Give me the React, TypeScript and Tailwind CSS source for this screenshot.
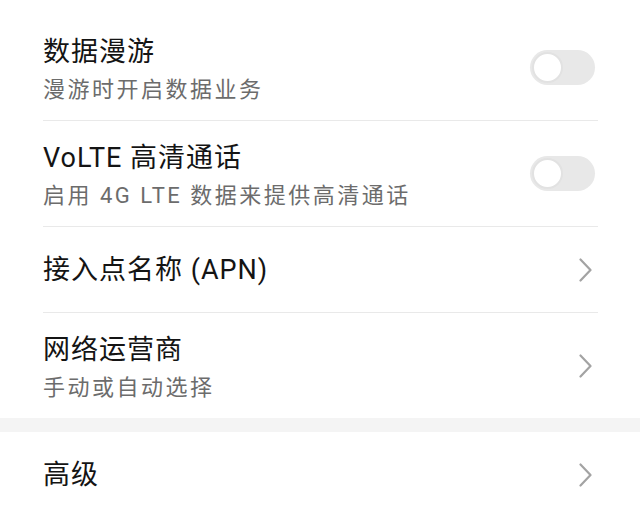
import React from 'react';

const font = { fontFamily: 'Roboto, "Noto Sans CJK SC", sans-serif' };

const Toggle: React.FC = () => (
  <div className="w-[65px] h-[35px] rounded-full bg-[#e8e8e8] flex items-center px-[2px] shrink-0">
    <div className="w-[31px] h-[31px] rounded-full bg-white border-2 border-[#e2e2e2]" />
  </div>
);

const Chevron: React.FC = () => (
  <svg width="13" height="24" viewBox="0 0 13 24" fill="none" className="mr-[3px] shrink-0">
    <polyline points="1.5,1.5 11.5,12 1.5,22.5" stroke="#a3a3a3" strokeWidth="2.2" strokeLinecap="round" strokeLinejoin="round" />
  </svg>
);

const Divider: React.FC = () => <div className="h-px bg-[#e9e9e9] ml-[43px] mr-[42px]" />;

const TwoLineRow: React.FC<{ title: string; sub: string; right: React.ReactNode }> = ({ title, sub, right }) => (
  <div className="h-[105px] flex items-center pl-[43px] pr-[45px]">
    <div className="flex-1 pt-[4px]">
      <div className="text-[27px] leading-[30px] tracking-[1px] text-[#141414]">{title}</div>
      <div className="mt-[9px] text-[22px] leading-[27px] tracking-[2.5px] text-[#6c6c6c]">{sub}</div>
    </div>
    {right}
  </div>
);

const OneLineRow: React.FC<{ title: string }> = ({ title }) => (
  <div className="h-[85px] flex items-center pl-[43px] pr-[45px]">
    <div className="flex-1 text-[27px] leading-[30px] tracking-[1px] text-[#141414]">{title}</div>
    <Chevron />
  </div>
);

const App: React.FC = () => {
  return (
    <div className="w-[640px] h-[517px] bg-white overflow-hidden" style={font}>
      <div className="h-[15px]" />
      <TwoLineRow title="数据漫游" sub="漫游时开启数据业务" right={<Toggle />} />
      <Divider />
      <TwoLineRow title="VoLTE 高清通话" sub="启用 4G LTE 数据来提供高清通话" right={<Toggle />} />
      <Divider />
      <OneLineRow title="接入点名称 (APN)" />
      <Divider />
      <TwoLineRow title="网络运营商" sub="手动或自动选择" right={<Chevron />} />
      <div className="h-[14px] bg-[#f4f4f4]" />
      <OneLineRow title="高级" />
    </div>
  );
};

export default App;
